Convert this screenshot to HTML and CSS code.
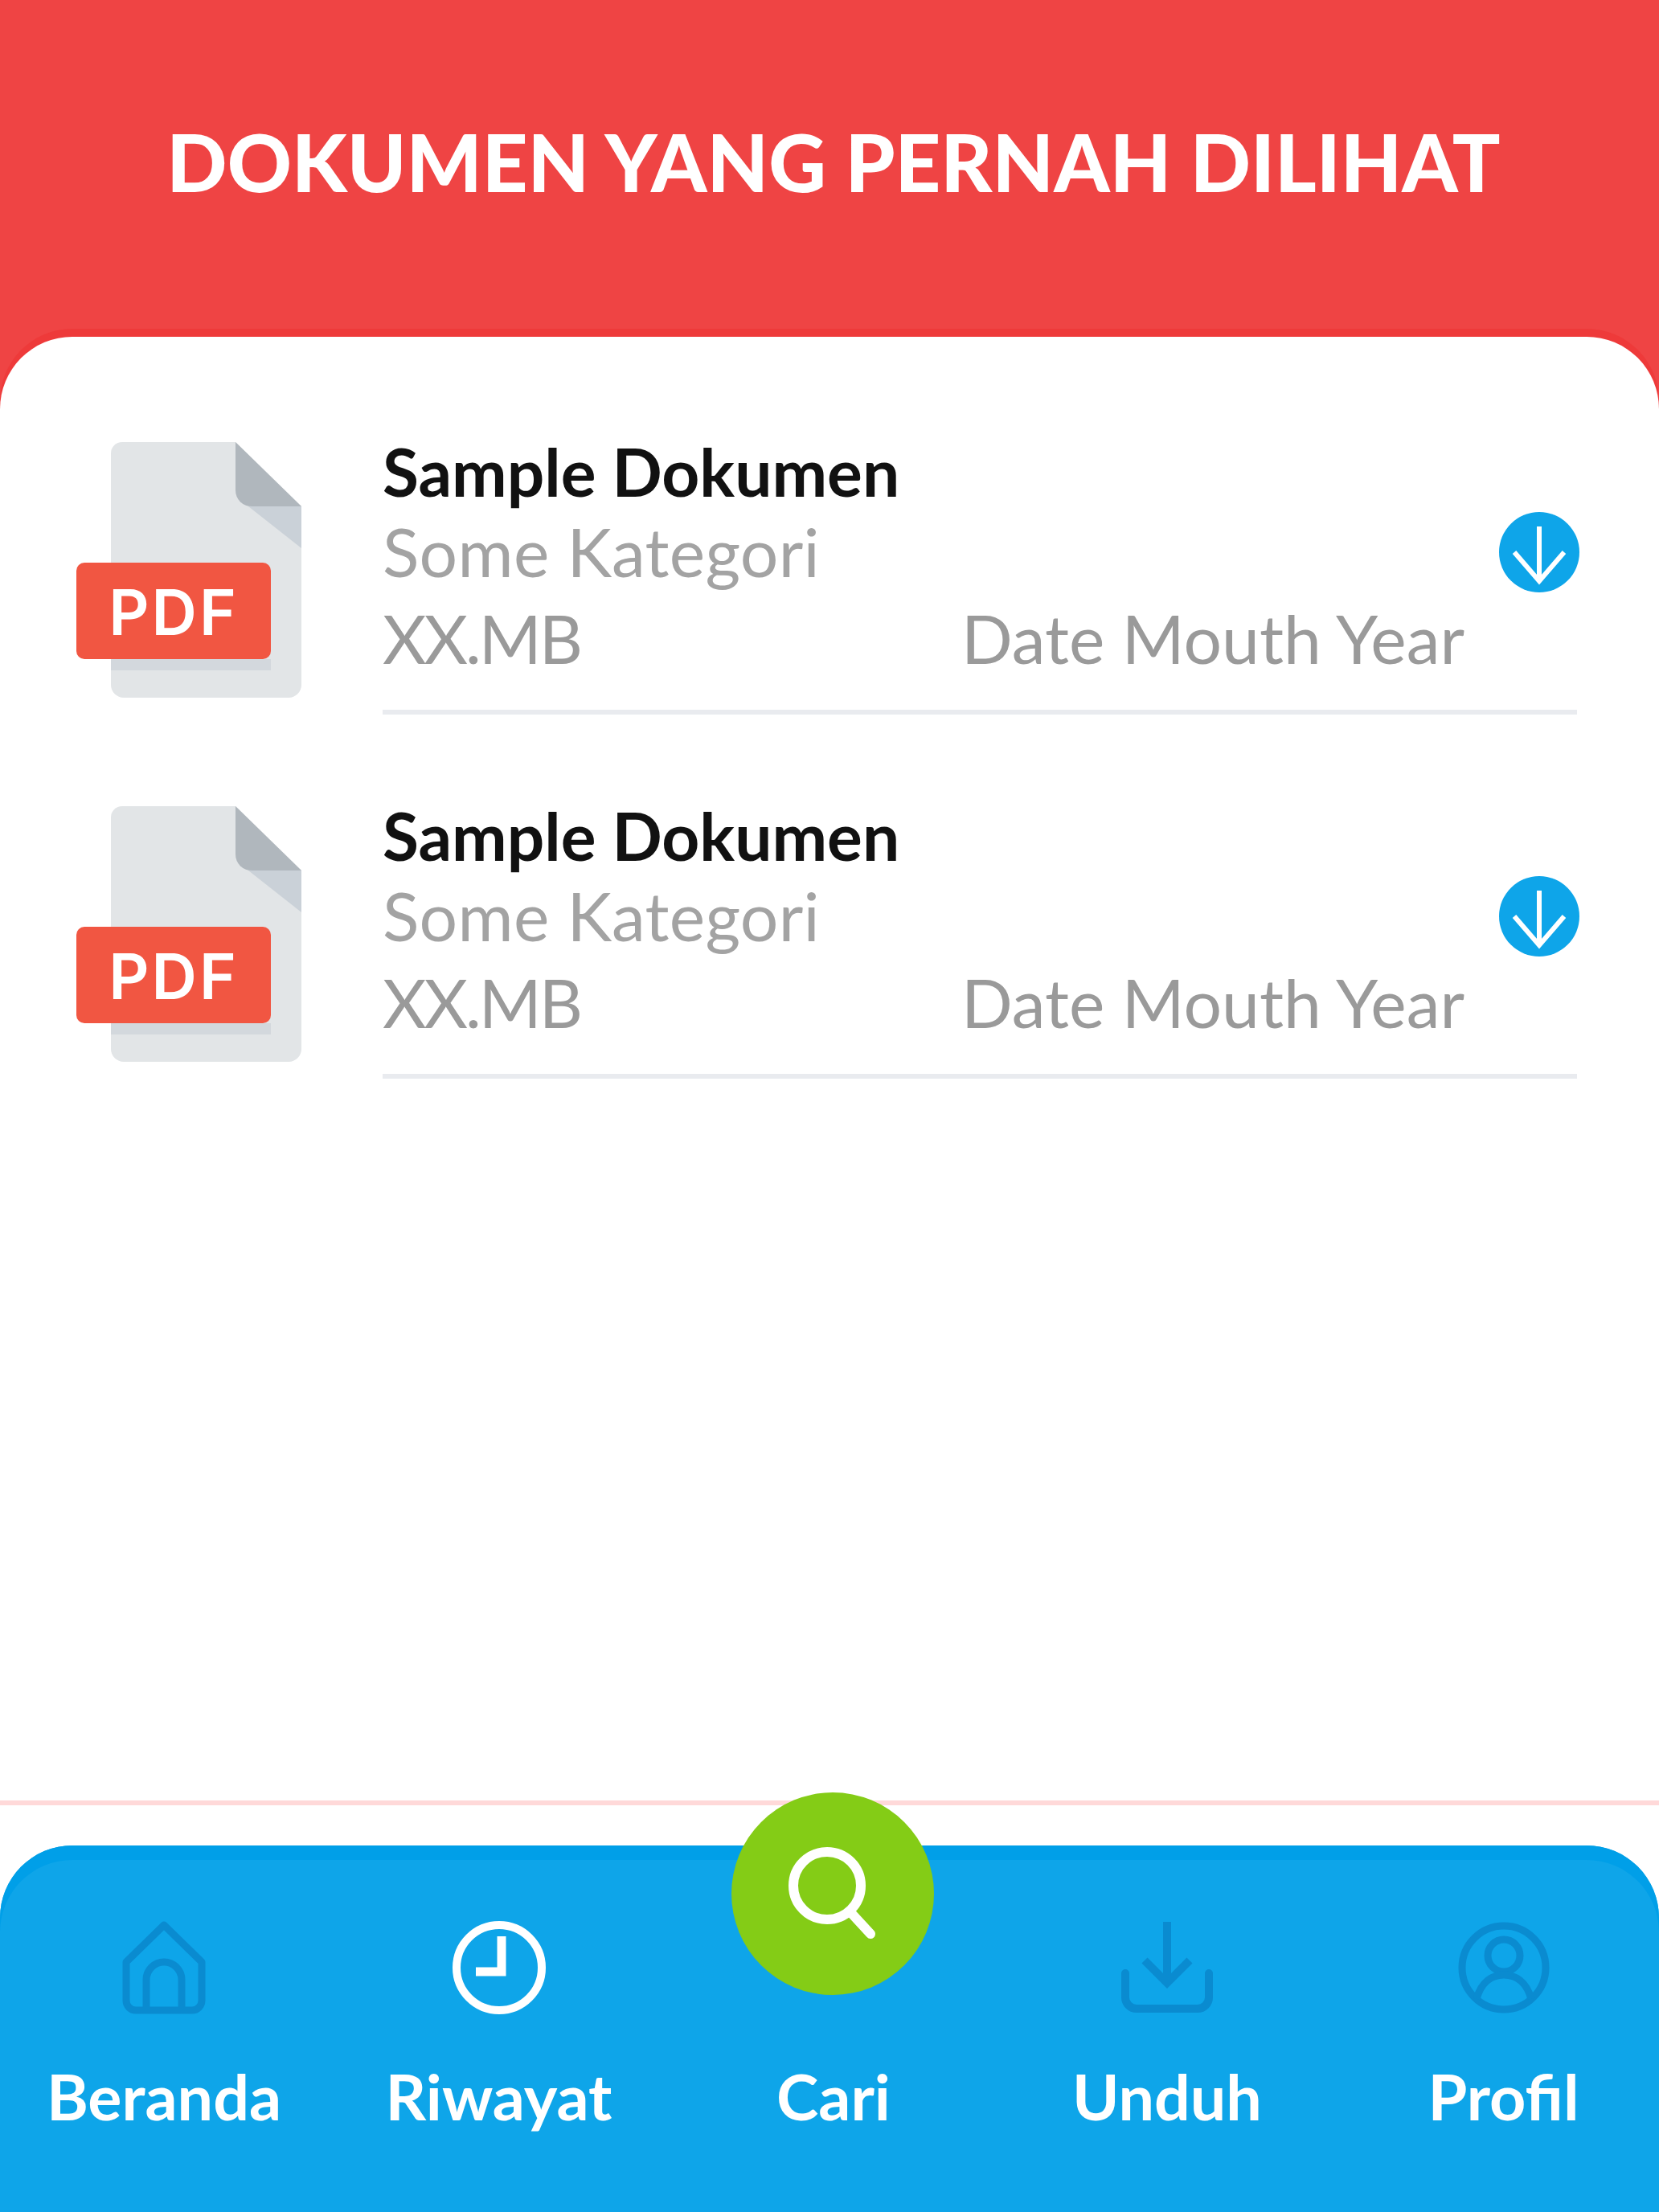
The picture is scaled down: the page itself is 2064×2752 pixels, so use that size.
FILE: index.html
```html
<!DOCTYPE html>
<html lang="id">
<head>
    <meta charset="UTF-8">
    <title>Dokumen Yang Pernah Dilihat</title>
    <link rel="stylesheet" href="styles.css">
</head>
<body>
    <svg class="defs" width="0" height="0">
        <symbol id="download" viewBox="0 0 100 100">
            <circle cx="50" cy="50" r="50" fill="#0ea5e9"/>
            <path d="M50 18V86M19 50L50 86L81 50" fill="none" stroke="#fff" stroke-width="6"/>
        </symbol>
    </svg>

    <div class="header">
        <h1>DOKUMEN YANG PERNAH DILIHAT</h1>
    </div>

    <div class="card">
        <div class="doc">
            <svg class="doc-icon" viewBox="0 0 280 318">
                <path d="M57 0H198L280 80V302a16 16 0 0 1-16 16H59a16 16 0 0 1-16-16V14A14 14 0 0 1 57 0Z" fill="#e2e5e7"/>
                <path d="M198 0V60a20 20 0 0 0 20 20H280Z" fill="#b0b7bd"/>
                <path d="M214 80L280 132V80Z" fill="#cad1d8"/>
                <rect x="43" y="270" width="199" height="14" fill="#d3d8dd"/>
                <rect x="0" y="150" width="242" height="120" rx="10" fill="#f15642"/>
                <text class="pdf-label" x="121" y="240" text-anchor="middle">PDF</text>
            </svg>
            <div class="doc-info">
                <div class="doc-text">
                    <div class="doc-title">Sample Dokumen</div>
                    <div class="doc-category">Some Kategori</div>
                    <div class="doc-meta">
                        <span class="doc-size">XX.MB</span>
                        <span>Date Mouth Year</span>
                    </div>
                </div>
                <svg class="doc-download"><use href="#download"/></svg>
            </div>
        </div>
        <div class="doc">
            <svg class="doc-icon" viewBox="0 0 280 318">
                <path d="M57 0H198L280 80V302a16 16 0 0 1-16 16H59a16 16 0 0 1-16-16V14A14 14 0 0 1 57 0Z" fill="#e2e5e7"/>
                <path d="M198 0V60a20 20 0 0 0 20 20H280Z" fill="#b0b7bd"/>
                <path d="M214 80L280 132V80Z" fill="#cad1d8"/>
                <rect x="43" y="270" width="199" height="14" fill="#d3d8dd"/>
                <rect x="0" y="150" width="242" height="120" rx="10" fill="#f15642"/>
                <text class="pdf-label" x="121" y="240" text-anchor="middle">PDF</text>
            </svg>
            <div class="doc-info">
                <div class="doc-text">
                    <div class="doc-title">Sample Dokumen</div>
                    <div class="doc-category">Some Kategori</div>
                    <div class="doc-meta">
                        <span class="doc-size">XX.MB</span>
                        <span>Date Mouth Year</span>
                    </div>
                </div>
                <svg class="doc-download"><use href="#download"/></svg>
            </div>
        </div>
    </div>

    <div class="nav">
        <div class="nav-item">
            <div class="nav-icon">
                <svg width="110" height="118" viewBox="0 0 110 118" fill="none" stroke="#0a8bd0" stroke-width="9">
                    <path d="M55 6L102 52V100a12 12 0 0 1-12 12H20a12 12 0 0 1-12-12V52Z" stroke-linejoin="round"/>
                    <path d="M33 112V74a22 22 0 0 1 44 0V112"/>
                </svg>
            </div>
            <span class="nav-label">Beranda</span>
        </div>
        <div class="nav-item">
            <div class="nav-icon">
                <svg width="118" height="118" viewBox="0 0 118 118" fill="none" stroke="#fff" stroke-width="10">
                    <circle cx="59" cy="59" r="53"/>
                    <path d="M62 20V64H30" stroke-width="11"/>
                </svg>
            </div>
            <span class="nav-label">Riwayat</span>
        </div>
        <div class="nav-item">
            <div class="nav-icon">
                <div class="search-btn">
                    <svg width="110" height="120" viewBox="0 0 110 120" fill="none" stroke="#fff" stroke-width="12">
                        <circle cx="48" cy="50" r="42"/>
                        <path d="M78 84L102 110" stroke-linecap="round"/>
                    </svg>
                </div>
            </div>
            <span class="nav-label">Cari</span>
        </div>
        <div class="nav-item">
            <div class="nav-icon">
                <svg width="116" height="118" viewBox="0 0 116 118" fill="none" stroke="#0a8bd0" stroke-width="10">
                    <path d="M58 2V76M30 50L58 78L86 50"/>
                    <path d="M6 66V96a14 14 0 0 0 14 14H96a14 14 0 0 0 14-14V66" stroke-linecap="round"/>
                </svg>
            </div>
            <span class="nav-label">Unduh</span>
        </div>
        <div class="nav-item">
            <div class="nav-icon">
                <svg width="116" height="118" viewBox="0 0 116 118" fill="none" stroke="#0a8bd0" stroke-width="9">
                    <circle cx="58" cy="59" r="52"/>
                    <circle cx="58" cy="44" r="20"/>
                    <path d="M24 98C30 76 44 68 58 68S86 76 92 98"/>
                </svg>
            </div>
            <span class="nav-label">Profil</span>
        </div>
    </div>
</body>
</html>
```

FILE: styles.css
```css
body {
    margin: 0;
    width: 2064px;
    height: 2752px;
    display: flex;
    flex-direction: column;
    overflow: hidden;
    background-color: #fff;
    font-family: "Lato", sans-serif;
}
.defs {
    position: absolute;
}
.pdf-label {
    font-family: "Inter", sans-serif;
    font-size: 78px;
    font-weight: 600;
    letter-spacing: 3px;
    fill: #fff;
}

/* red top bar */
.header {
    height: 540px;
    margin-bottom: -121px;
    padding: 146px 0 0 10px;
    box-sizing: border-box;
    background-color: #ef4444;
}
.header h1 {
    margin: 0;
    color: #fff;
    font-size: 99px;
    line-height: 110px;
    font-weight: 900;
    text-align: center;
}

/* document list */
.card {
    height: 1828px;
    box-sizing: border-box;
    padding: 131px 102px 0 95px;
    background-color: #fff;
    border-radius: 90px 90px 0 0;
    border-bottom: 6px solid #ffd9d9;
    box-shadow: 0 -10px 0 #ee3a3a;
    display: flex;
    flex-direction: column;
    gap: 114px;
}
.doc {
    display: flex;
    gap: 101px;
    height: 339px;
}
.doc-icon {
    width: 280px;
    height: 318px;
    flex-shrink: 0;
}
.doc-info {
    flex: 1;
    display: flex;
    box-sizing: border-box;
    border-bottom: 6px solid #e9ebef;
}
.doc-text {
    flex: 1;
    margin-right: 43px;
}
.doc-title {
    color: #111;
    font-size: 82px;
    line-height: 84px;
    font-weight: 700;
    margin-top: -6px;
}
.doc-category {
    color: #a3a3a3;
    font-size: 84px;
    line-height: 100px;
    letter-spacing: 0.3px;
    margin-top: 8px;
}
.doc-meta {
    color: #9a9a9a;
    font-size: 84px;
    line-height: 100px;
    display: flex;
    justify-content: space-between;
    margin-top: 8px;
}
.doc-size {
    letter-spacing: -3px;
}
.doc-download {
    width: 100px;
    height: 100px;
    margin-top: 87px;
    margin-right: -3px;
    flex-shrink: 0;
}

/* bottom navigation */
.nav {
    height: 456px;
    margin-top: 50px;
    box-sizing: border-box;
    padding-top: 93px;
    background-color: #0ea5e9;
    border-radius: 90px 90px 0 0;
    box-shadow: inset 0 18px 0 #009fe8;
    display: grid;
    grid-template-columns: 408px 425px 408px 422px 401px;
}
.nav-item {
    position: relative;
    display: flex;
    flex-direction: column;
    align-items: center;
}
.nav-item:last-child {
    padding-left: 14px;
}
.nav-icon {
    height: 118px;
}
.nav-label {
    color: #fff;
    font-size: 79px;
    line-height: 88px;
    font-weight: 700;
    margin-top: 57px;
}
.search-btn {
    position: absolute;
    top: -159px;
    left: 77px;
    width: 252px;
    height: 252px;
    border-radius: 50%;
    background-color: #84cc16;
    display: flex;
    align-items: center;
    justify-content: center;
}
```
